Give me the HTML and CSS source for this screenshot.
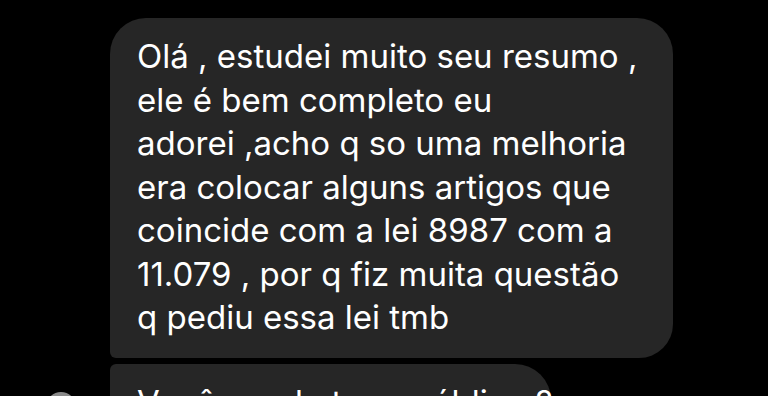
FILE: index.html
```html
<!DOCTYPE html>
<html lang="pt">
  <head>
    <meta charset="UTF-8" />
    <meta name="viewport" content="width=device-width, initial-scale=1.0" />
    <title>Mensagens</title>
    <link rel="stylesheet" href="styles.css">
  </head>
  <body>
    <div class="chat">
      <div class="row">
        <div class="bubble first">
          Olá , estudei muito seu resumo ,<br>
          ele é bem completo eu<br>
          adorei ,acho q so uma melhoria<br>
          era colocar alguns artigos que<br>
          coincide com a lei 8987 com a<br>
          11.079 , por q fiz muita questão<br>
          q pediu essa lei tmb
        </div>
      </div>
      <div class="row">
        <div class="avatar"></div>
        <div class="bubble last">
          Vocês pode ter o público ?
        </div>
      </div>
    </div>
  </body>
</html>
```

FILE: styles.css
```css
body {
  background-color: #000;
  margin: 0;
  height: 396px;
  overflow: hidden;
  font-family: Inter, "Noto Sans", sans-serif;
}
.chat {
  display: flex;
  flex-direction: column;
  gap: 6px;
  padding-top: 18px;
}
.row {
  display: flex;
  align-items: flex-start;
  padding-left: 110px;
}
.bubble {
  background-color: #262626;
  color: #fff;
  font-size: 33px;
  line-height: 43.5px;
  white-space: nowrap;
  padding: 17px 27px 0 27px;
  box-sizing: border-box;
}
.bubble.first {
  width: 563px;
  height: 340px;
  border-radius: 36px 36px 34px 6px;
}
.bubble.last {
  width: 441px;
  height: 80px;
  border-radius: 6px 36px 36px 36px;
}
.row .avatar {
  width: 30px;
  height: 30px;
  border-radius: 50%;
  background-color: #8a8a8a;
  margin: 28px 34px 0 -64px;
}
```
